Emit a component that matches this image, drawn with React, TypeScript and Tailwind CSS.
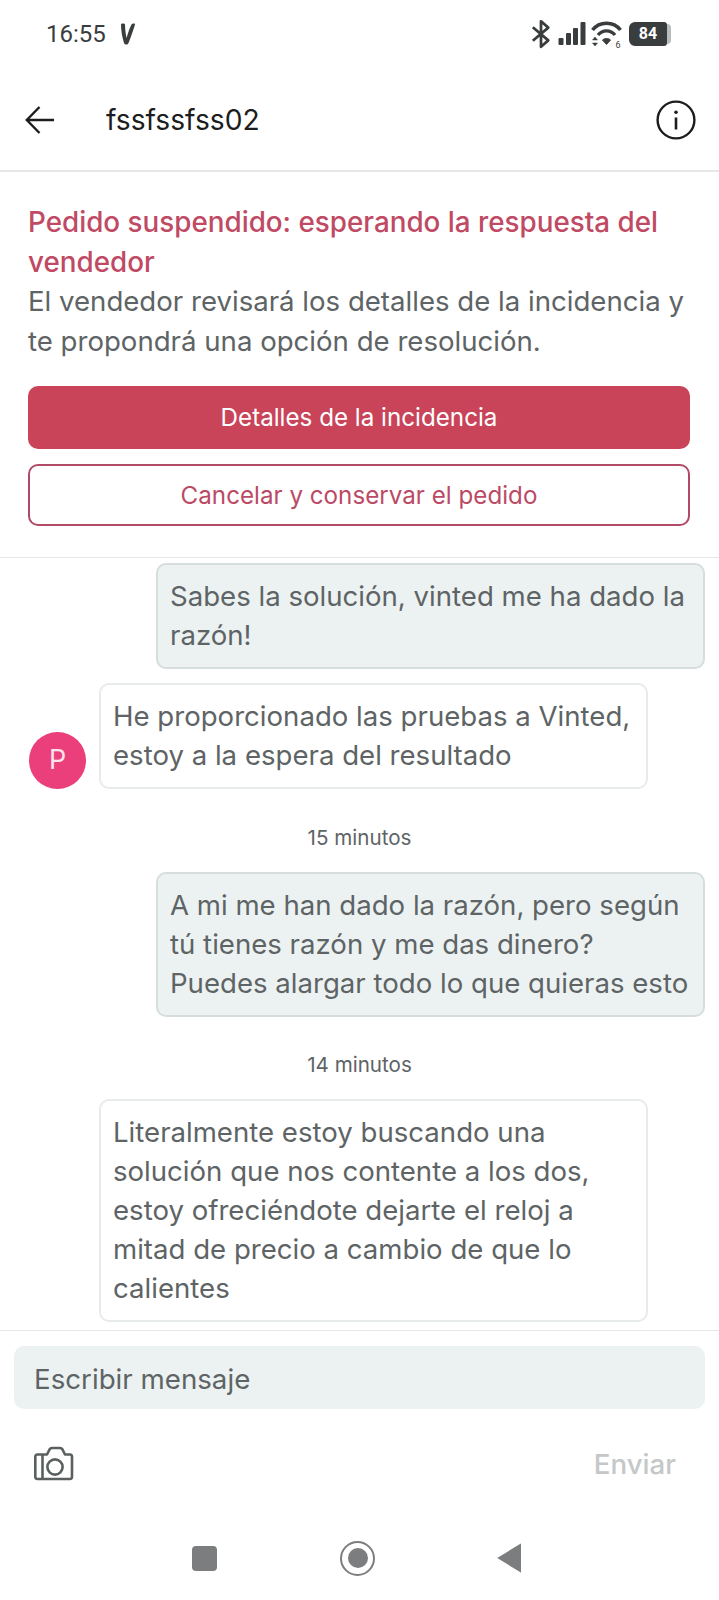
const font = { fontFamily: '"Inter", "Liberation Sans", sans-serif' };

function StatusBar() {
  return (
    <div className="h-[70px] flex items-center justify-between pl-[46px] pr-[48px] pb-[2px] shrink-0">
      <div className="flex items-center gap-[14px]">
        <span className="text-[24px] text-[#3a3d3e] leading-none font-['Roboto',sans-serif]">16:55</span>
        <svg width="16" height="24" viewBox="0 0 16 24" fill="#3a3d3e">
          <path d="M1 2.5C1 1.5 4.5 1 5 2.5C5.2 7 5.5 12 6.6 16C8 11 9.5 6 11.5 2.5C12.5 1 15.5 1.2 15 2.5C13 9 10.5 16 8.5 21C7.5 23 5 23 4 21C2 15 1 8 1 2.5Z" />
        </svg>
      </div>
      <div className="flex items-center">
        <svg width="20" height="34" viewBox="0 0 22 34" fill="none" stroke="#3a3d3e" strokeWidth="3" className="mr-[6px]">
          <path d="M2 9.5 L19 24 L11 31 V3 L19 10 L2 24.5" strokeLinejoin="round" />
        </svg>
        <svg width="29" height="24" viewBox="0 0 28 24" fill="#3a3d3e" className="mr-[5px]">
          <rect x="1" y="16" width="5" height="7" rx="1" />
          <rect x="8.5" y="11" width="5" height="12" rx="1" />
          <rect x="15.5" y="6" width="5" height="17" rx="1" />
          <rect x="23" y="0" width="5" height="23" rx="1" />
        </svg>
        <svg width="31" height="30" viewBox="0 0 30 30" fill="none" stroke="#3a3d3e" className="mr-[7px]">
          <path d="M1 11 C8 2 22 2 29 11" strokeWidth="3.6" />
          <path d="M6.5 16 C11 10.5 19 10.5 23.5 16" strokeWidth="3.4" />
          <path d="M11 21 L15 25.5 L19 21 C17 19 13 19 11 21Z" fill="#3a3d3e" strokeWidth="1" />
          <path d="M1 21 L3.5 18 L6 21Z M1 24 L6 24 L3.5 27Z" fill="#3a3d3e" strokeWidth="0.5" />
          <text x="24" y="28.5" fontSize="9" fill="#3a3d3e" stroke="none" fontFamily="Roboto, sans-serif">6</text>
        </svg>
        <div className="flex items-center">
          <div className="w-[38px] h-[24px] bg-[#3a3d3e] rounded-l-[6px] rounded-r-[3px] flex items-center justify-center text-white text-[16px] font-bold leading-none font-['Roboto',sans-serif]">84</div>
          <div className="w-[4px] h-[20px] bg-[#b9bcbd] rounded-r-[4px]" />
        </div>
      </div>
    </div>
  );
}

function Header() {
  return (
    <div className="h-[102px] shrink-0 flex items-center border-b-[2px] border-[#e6e8e8] pl-[25px] pr-[23px]">
      <svg width="30" height="28" viewBox="0 0 30 28" fill="none" stroke="#1b1d1e" strokeWidth="2.4">
        <path d="M29 14 H2 M14.5 1 L1.8 14 L14.5 27" />
      </svg>
      <span className="ml-[51px] text-[28.2px] leading-none text-[#1b1d1e] flex-1">fssfssfss02</span>
      <svg width="40" height="40" viewBox="0 0 40 40" fill="none" stroke="#1b1d1e">
        <circle cx="20" cy="20" r="18.4" strokeWidth="2.4" />
        <path d="M20 17.5 V29.5" strokeWidth="2.6" />
        <circle cx="20" cy="12.2" r="1.8" fill="#1b1d1e" stroke="none" />
      </svg>
    </div>
  );
}

function Banner() {
  return (
    <div className="shrink-0 border-b border-[#e6e8e8] pl-[28px] pr-[29px] pt-[31px] pb-[31px] bg-white">
      <p className="text-[27.8px] leading-[39.5px] font-medium text-[#c04a64]">
        Pedido suspendido: esperando la respuesta del vendedor
      </p>
      <p className="text-[27.6px] leading-[39.5px] text-[#5e6465]">
        El vendedor revisará los detalles de la incidencia y te propondrá una opción de resolución.
      </p>
      <div className="mt-[25px] h-[63px] pt-[2px] rounded-[10px] bg-[#c94459] text-white text-[24.2px] flex items-center justify-center">
        Detalles de la incidencia
      </div>
      <div className="mt-[15px] h-[62px] pt-[2px] rounded-[10px] border-2 border-[#b04a66] text-[#bb4a66] text-[24.2px] flex items-center justify-center">
        Cancelar y conservar el pedido
      </div>
    </div>
  );
}

function Bubble({ me, children }: { me?: boolean; children: React.ReactNode }) {
  return (
    <div
      className={
        me
          ? "w-[549px] rounded-[10px] border-2 border-[#d6dddd] bg-[#ecf2f2] px-[12px] py-[12px] text-[27.6px] leading-[39px] whitespace-nowrap text-[#5e6465]"
          : "w-[549px] rounded-[10px] border-2 border-[#e8ebeb] bg-white px-[12px] py-[12px] text-[27.6px] leading-[39px] whitespace-nowrap text-[#5e6465]"
      }
    >
      {children}
    </div>
  );
}

function Time({ children }: { children: React.ReactNode }) {
  return (
    <div className="mt-[33.5px] mb-[19px] mr-[15px] h-[30px] leading-[30px] text-center text-[20.6px] text-[#5e6465]">{children}</div>
  );
}

function Chat() {
  return (
    <div className="h-[772px] shrink-0 overflow-hidden pt-[5px] pl-[29px] pr-[14px] flex flex-col">
      <div className="self-end">
        <Bubble me>
          Sabes la solución, vinted me ha dado la
          <br />
          razón!
        </Bubble>
      </div>
      <div className="mt-[14px] flex items-end gap-[13px]">
        <div className="w-[57px] h-[57px] rounded-full bg-[#ea3f7b] text-[#fbe4ec] text-[27px] flex items-center justify-center">P</div>
        <Bubble>
          He proporcionado las pruebas a Vinted,
          <br />
          estoy a la espera del resultado
        </Bubble>
      </div>
      <Time>15 minutos</Time>
      <div className="self-end">
        <Bubble me>
          A mi me han dado la razón, pero según
          <br />
          tú tienes razón y me das dinero?
          <br />
          Puedes alargar todo lo que quieras esto
        </Bubble>
      </div>
      <Time>14 minutos</Time>
      <div className="ml-[70px]">
        <Bubble>
          Literalmente estoy buscando una
          <br />
          solución que nos contente a los dos,
          <br />
          estoy ofreciéndote dejarte el reloj a
          <br />
          mitad de precio a cambio de que lo
          <br />
          calientes
        </Bubble>
      </div>
    </div>
  );
}

function Composer() {
  return (
    <div className="shrink-0 border-t border-[#e6e8e8] pt-[15px] px-[14px]">
      <div className="h-[63px] pt-[5px] rounded-[10px] bg-[#ecf2f2] flex items-center pl-[20px] text-[27.7px] text-[#5e6465]">
        Escribir mensaje
      </div>
      <div className="mt-[36px] h-[36px] flex items-center justify-between pl-[20px] pr-[29px]">
        <svg width="40" height="36" viewBox="0 0 40 36" fill="none" stroke="#5a6060" strokeWidth="2.6">
          <path d="M3.5 9.5 C2 9.5 1.3 10.5 1.3 12 V31.5 C1.3 33 2.3 34 3.5 34 H36 C37.5 34 38 33 38 31.5 V12 C38 10.5 37.2 9.5 36 9.5 H31 L28.5 4.5 C28 3.6 27 3 26 3 H18 C17 3 16 3.6 15.5 4.5 L13 9.5 Z" strokeLinejoin="round" />
          <path d="M8.5 9.5 V34" />
          <circle cx="21" cy="22" r="7.6" />
        </svg>
        <span className="pt-[4px] text-[27.7px] font-medium text-[#c4c8c8]">Enviar</span>
      </div>
    </div>
  );
}

function NavBar() {
  return (
    <div className="shrink-0 mt-[59px] h-[36px] flex items-center pl-[192px]">
      <div className="w-[25px] h-[25px] rounded-[4px] bg-[#7b7d7e]" />
      <div className="ml-[123px] w-[35px] h-[35px] rounded-full border-[2.5px] border-[#7b7d7e] flex items-center justify-center">
        <div className="w-[20px] h-[20px] rounded-full bg-[#7b7d7e]" />
      </div>
      <svg width="25" height="30" viewBox="0 0 25 30" fill="#7b7d7e" className="ml-[122px]">
        <path d="M24 1 V29 Q24 30 23 29 L1 15.5 Q0 15 1 14.5 L23 1 Q24 0 24 1Z" />
      </svg>
    </div>
  );
}

export default function App() {
  return (
    <div style={font} className="w-[719px] h-[1600px] bg-white flex flex-col overflow-hidden">
      <StatusBar />
      <Header />
      <Banner />
      <Chat />
      <Composer />
      <NavBar />
    </div>
  );
}
